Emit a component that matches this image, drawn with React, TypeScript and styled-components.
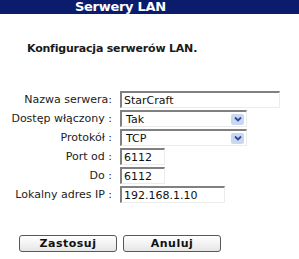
import styled, { createGlobalStyle } from 'styled-components';

const GlobalStyle = createGlobalStyle`
  body {
    margin: 0;
    background: #ffffff;
    font-family: "DejaVu Sans", Verdana, sans-serif;
  }
`;

const Arrow = () => (
  <svg width="8" height="6" viewBox="0 0 8 6">
    <path d="M1 1.5 L4 4.5 L7 1.5" stroke="#2a4a9a" strokeWidth="1.8" fill="none" />
  </svg>
);

const Dropdown = ({ value }: { value: string }) => (
  <SelectBox>
    <SelectText>{value}</SelectText>
    <ArrowBtn>
      <Arrow />
    </ArrowBtn>
  </SelectBox>
);

const App = () => {
  return (
    <Page>
      <GlobalStyle />
      <Header>Serwery LAN</Header>
      <Heading>Konfiguracja serwerów LAN.</Heading>
      <Form>
        <Label>Nazwa serwera:</Label>
        <Input width={160} defaultValue="StarCraft" />
        <Label>Dostęp włączony :</Label>
        <Dropdown value="Tak" />
        <Label>Protokół :</Label>
        <Dropdown value="TCP" />
        <Label>Port od :</Label>
        <Input width={45} defaultValue="6112" />
        <Label>Do :</Label>
        <Input width={45} defaultValue="6112" />
        <Label>Lokalny adres IP :</Label>
        <Input width={105} defaultValue="192.168.1.10" />
      </Form>
      <Buttons>
        <Button>Zastosuj</Button>
        <Button>Anuluj</Button>
      </Buttons>
    </Page>
  );
};

export default App;

const Page = styled.div`
  width: 299px;
  height: 259px;
  overflow: hidden;
  color: #1a1a1a;
`;

const Header = styled.div`
  height: 14px;
  background: #0c1c6c;
  color: #ffffff;
  font-weight: bold;
  font-size: 13px;
  letter-spacing: -0.3px;
  line-height: 14px;
  padding-left: 75px;
`;

const Heading = styled.div`
  margin: 28px 0 0 27px;
  font-size: 11px;
  font-weight: bold;
  letter-spacing: -0.2px;
  height: 13px;
  line-height: 13px;
`;

const Form = styled.div`
  margin-top: 36px;
  display: grid;
  grid-template-columns: 112px auto;
  column-gap: 8px;
  row-gap: 2px;
  align-items: center;
`;

const Label = styled.div`
  text-align: right;
  font-size: 11px;
  color: #222;
  white-space: nowrap;
`;

const Input = styled.input<{ width: number }>`
  box-sizing: border-box;
  width: ${(p) => p.width}px;
  height: 17px;
  margin: 0;
  padding: 0 2px;
  border-style: solid;
  border-width: 2px 1px 1px 2px;
  border-color: #808080 #ececec #ececec #808080;
  font-family: "DejaVu Sans", Verdana, sans-serif;
  font-size: 11px;
  color: #111;
  outline: none;
  background: #fff;
`;

const SelectBox = styled.div`
  box-sizing: border-box;
  width: 127px;
  height: 17px;
  display: flex;
  align-items: center;
  justify-content: space-between;
  border-style: solid;
  border-width: 2px 1px 1px 2px;
  border-color: #808080 #ececec #ececec #808080;
  padding: 0 2px 0 4px;
  background: #fff;
`;

const SelectText = styled.span`
  font-size: 11px;
  color: #111;
`;

const ArrowBtn = styled.div`
  width: 13px;
  height: 11px;
  background: #c9d7f0;
  border-radius: 2px;
  display: flex;
  align-items: center;
  justify-content: center;
`;

const Buttons = styled.div`
  margin: 32px 0 0 19px;
  display: flex;
  gap: 6px;
`;

const Button = styled.button`
  box-sizing: border-box;
  width: 98px;
  height: 17px;
  padding: 0;
  border: 1px solid #55585e;
  border-radius: 3px;
  background: linear-gradient(#ffffff, #e6e6e6);
  font-family: "DejaVu Sans", Verdana, sans-serif;
  font-size: 11px;
  font-weight: bold;
  color: #111;
  letter-spacing: 0.5px;
`;
